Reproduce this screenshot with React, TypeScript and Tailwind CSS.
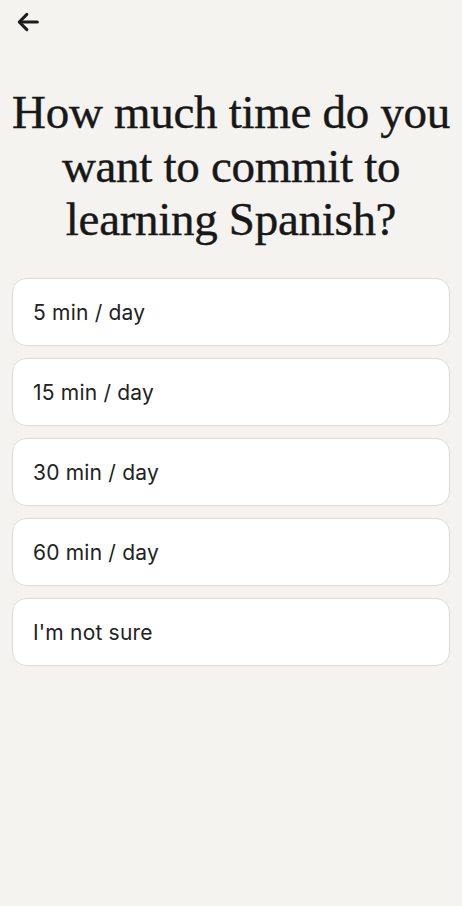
const options = ['5 min / day', '15 min / day', '30 min / day', '60 min / day', "I'm not sure"];

export default function App() {
  return (
    <div className="min-h-[906px] w-full bg-[#f4f3ef] flex flex-col">
      <div className="h-[44px] flex items-center pl-[14px]">
        <svg width="28" height="28" viewBox="0 0 24 24" fill="none" stroke="#1c1c1c" strokeWidth="2.6" strokeLinecap="round" strokeLinejoin="round">
          <path d="M20 12H5" />
          <path d="M11 5.5L4.5 12l6.5 6.5" />
        </svg>
      </div>
      <h1
        className="mt-[42px] px-2 text-center text-[47px] leading-[53.5px] text-[#181818] tracking-[-0.3px]"
        style={{ fontFamily: '"Liberation Serif", "DejaVu Serif", serif', WebkitTextStroke: '0.4px #181818' }}
      >
        How much time do you want to commit to learning Spanish?
      </h1>
      <div className="mt-[31px] px-3 flex flex-col gap-3">
        {options.map((o) => (
          <button
            key={o}
            className="h-[68px] w-full rounded-[14px] border border-[#dedbd5] bg-white px-5 pt-[2px] text-left text-[21px] tracking-[0.2px] text-[#222]"
            style={{ fontFamily: 'Inter, "Noto Sans", sans-serif' }}
          >
            {o}
          </button>
        ))}
      </div>
    </div>
  );
}
